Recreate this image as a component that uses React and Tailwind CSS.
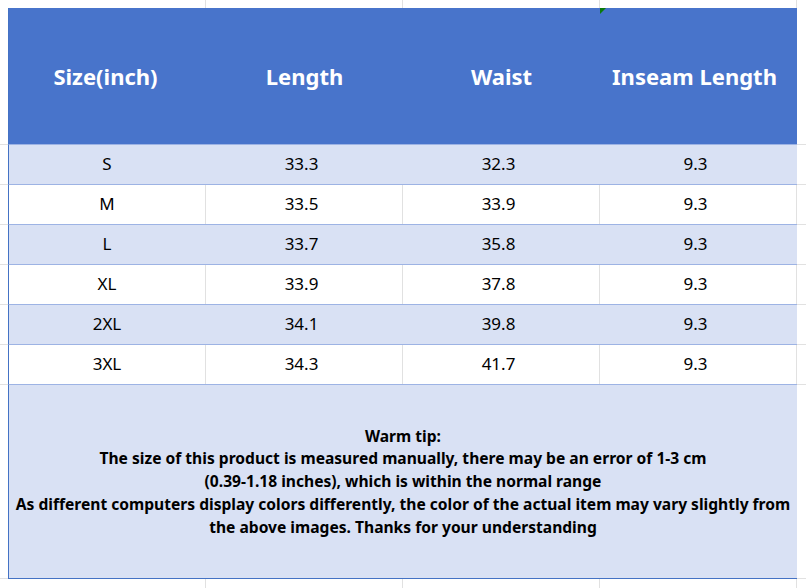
import React from 'react';

const headers = ['Size(inch)', 'Length', 'Waist', 'Inseam Length'];

const rows = [
  ['S', '33.3', '32.3', '9.3'],
  ['M', '33.5', '33.9', '9.3'],
  ['L', '33.7', '35.8', '9.3'],
  ['XL', '33.9', '37.8', '9.3'],
  ['2XL', '34.1', '39.8', '9.3'],
  ['3XL', '34.3', '41.7', '9.3'],
];

const tipLines = [
  'Warm tip:',
  'The size of this product is measured manually, there may be an error of 1-3 cm',
  '(0.39-1.18 inches), which is within the normal range',
  'As different computers display colors differently, the color of the actual item may vary slightly from',
  'the above images. Thanks for your understanding',
];

const GutterCols = () => (
  <div className="flex">
    <div className="w-[9px] shrink-0" />
    {[0, 1, 2, 3].map((i) => (
      <div key={i} className="w-[197px] shrink-0 border-r border-[#e1e1e1]" />
    ))}
    <div className="flex-1" />
  </div>
);

const App = () => {
  return (
    <div className="w-[806px] h-[588px] overflow-hidden bg-white text-black font-['Noto_Sans',sans-serif] flex flex-col">
      {/* top gutter */}
      <div className="h-2 shrink-0 [&>div]:h-full">
        <GutterCols />
      </div>

      {/* header */}
      <div className="flex h-[137px] shrink-0">
        <div className="w-2 shrink-0 border-b border-[#e1e1e1]" />
        <div className="flex w-[789px] shrink-0 bg-[#4874cb] border-l border-[#4472c4] border-b border-b-[#9db3e4]">
          {headers.map((h, i) => (
            <div
              key={h}
              className={`relative w-[197px] shrink-0 flex items-center justify-center text-white font-bold text-[22px] ${
                i === 3 ? 'pr-2' : i === 0 ? 'pr-1' : ''
              }`}
            >
              {i === 3 && (
                <svg className="absolute left-0 top-0" width="6" height="6" viewBox="0 0 6 6">
                  <polygon points="0,0 6,0 0,6" fill="#0a7a0a" />
                </svg>
              )}
              {h}
            </div>
          ))}
        </div>
        <div className="flex-1 border-b border-[#e1e1e1]" />
      </div>

      {/* data rows */}
      {rows.map((r, ri) => {
        const shaded = ri % 2 === 0;
        return (
          <div key={r[0]} className="flex h-10 shrink-0">
            <div className="w-2 shrink-0 border-b border-[#e1e1e1]" />
            <div
              className={`flex w-[789px] shrink-0 border-l border-[#4472c4] border-b border-b-[#9db3e4] ${
                shaded ? 'bg-[#d9e1f4]' : 'bg-white'
              }`}
            >
              {r.map((c, ci) => (
                <div
                  key={ci}
                  className={`w-[197px] shrink-0 flex items-center justify-center pb-[2px] text-[17px] border-r ${
                    ci === 0 ? '' : 'pr-[5px]'
                  } ${shaded ? 'border-transparent' : 'border-[#e1e1e1]'}`}
                >
                  {c}
                </div>
              ))}
            </div>
            <div className="flex-1 border-b border-[#e1e1e1]" />
          </div>
        );
      })}

      {/* warm tip */}
      <div className="flex h-[194px] shrink-0">
        <div className="w-2 shrink-0 border-b border-[#e1e1e1]" />
        <div className="w-[789px] shrink-0 bg-[#d9e1f4] border-l border-b border-[#4472c4] flex flex-col items-center justify-center text-[15.6px] font-bold leading-[22.75px] text-center">
          {tipLines.map((l) => (
            <div key={l} className="whitespace-nowrap">
              {l}
            </div>
          ))}
        </div>
        <div className="flex-1 border-b border-[#e1e1e1]" />
      </div>

      {/* bottom gutter */}
      <div className="flex-1 [&>div]:h-full">
        <GutterCols />
      </div>
    </div>
  );
};

export default App;
